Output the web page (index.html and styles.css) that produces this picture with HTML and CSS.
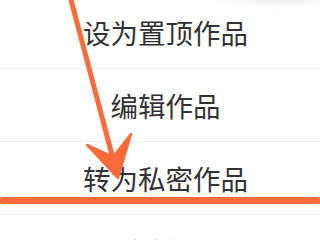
FILE: index.html
```html
<!DOCTYPE html>
<html lang="zh-CN">
<head>
<meta charset="utf-8">
<link rel="stylesheet" href="styles.css">
</head>
<body>
<div class="page">
  <div class="shade"></div>
  <ul class="menu">
    <li class="item">设为置顶作品</li>
    <li class="item">编辑作品</li>
    <li class="item">转为私密作品</li>
    <li class="item">删除作品</li>
  </ul>
  <svg class="annot" width="320" height="240" viewBox="0 0 320 240">
    <line x1="70" y1="-4" x2="116" y2="170" stroke="#fd6a3c" stroke-width="5" stroke-linecap="round"/>
    <polygon points="118,178 87,145 113,157 131,134" fill="#fd6a3c" stroke="#fd6a3c" stroke-width="2.5" stroke-linejoin="round"/>
    <rect x="0" y="197" width="320" height="7" rx="2" fill="#fd6a3c"/>
  </svg>
</div>
</body>
</html>
```

FILE: styles.css
```css
html, body {
  margin: 0;
  padding: 0;
  background: #ffffff;
}
.page {
  position: relative;
  width: 320px;
  height: 240px;
  overflow: hidden;
  background: #ffffff;
}
.shade {
  position: absolute;
  top: -30px;
  right: -40px;
  width: 160px;
  height: 40px;
  border-radius: 50%;
  background: radial-gradient(ellipse at center, rgba(0,0,0,0.12), rgba(0,0,0,0) 70%);
}
.menu {
  list-style: none;
  margin: -4px 0 0 0;
  padding: 0;
}
.item {
  height: 72px;
  border-bottom: 1px solid #efefef;
  display: flex;
  align-items: center;
  justify-content: center;
  padding-left: 11px;
  font-family: "Noto Sans CJK SC", "Noto Sans", sans-serif;
  font-size: 27.5px;
  color: #333333;
}
.annot {
  position: absolute;
  left: 0;
  top: 0;
}
```
